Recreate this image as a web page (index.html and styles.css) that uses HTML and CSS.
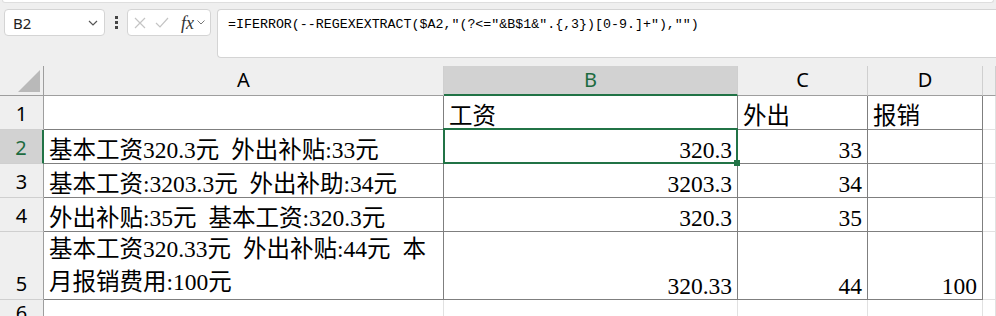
FILE: index.html
```html
<!DOCTYPE html>
<html lang="zh-CN">
<head>
    <meta charset="UTF-8">
    <title>REGEXEXTRACT</title>
    <link rel="stylesheet" href="styles.css">
</head>
<body>
    <div class="topbar">
        <div class="ribbon-edge"></div>
        <div class="formula-row">
            <div class="name-box">
                <span>B2</span>
                <svg class="chev" width="10" height="6" viewBox="0 0 10 6"><polyline points="1,1 5,5 9,1" fill="none" stroke="#555" stroke-width="1.2"/></svg>
            </div>
            <div class="grip"><i></i><i></i><i></i></div>
            <div class="fx-box">
                <svg width="12" height="12" viewBox="0 0 12 12"><path d="M1 1 L11 11 M11 1 L1 11" stroke="#c4c4c4" stroke-width="1.2"/></svg>
                <svg width="14" height="11" viewBox="0 0 14 11"><polyline points="1,6 5,10 13,1" fill="none" stroke="#c4c4c4" stroke-width="1.2"/></svg>
                <span class="fx">fx</span>
                <svg width="8" height="5" viewBox="0 0 8 5"><polyline points="0.5,0.5 4,4 7.5,0.5" fill="none" stroke="#777" stroke-width="1"/></svg>
            </div>
            <div class="formula">=IFERROR(--REGEXEXTRACT($A2,"(?&lt;="&amp;B$1&amp;".{,3})[0-9.]+"),"")</div>
        </div>
    </div>

    <div class="sheet">
        <!-- 欄標題 -->
        <div class="corner"><span class="tri"></span></div>
        <div class="col-head">A</div>
        <div class="col-head active">B</div>
        <div class="col-head">C</div>
        <div class="col-head">D</div>
        <div class="col-head"></div>

        <!-- 第1列 -->
        <div class="row-head">1</div>
        <div class="cell"></div>
        <div class="cell">工资</div>
        <div class="cell">外出</div>
        <div class="cell">报销</div>
        <div class="cell out"></div>

        <!-- 第2列 -->
        <div class="row-head active">2</div>
        <div class="cell">基本工资320.3元 外出补贴:33元</div>
        <div class="cell num selected">320.3</div>
        <div class="cell num">33</div>
        <div class="cell"></div>
        <div class="cell out"></div>

        <!-- 第3列 -->
        <div class="row-head">3</div>
        <div class="cell">基本工资:3203.3元 外出补助:34元</div>
        <div class="cell num">3203.3</div>
        <div class="cell num">34</div>
        <div class="cell"></div>
        <div class="cell out"></div>

        <!-- 第4列 -->
        <div class="row-head">4</div>
        <div class="cell">外出补贴:35元 基本工资:320.3元</div>
        <div class="cell num">320.3</div>
        <div class="cell num">35</div>
        <div class="cell"></div>
        <div class="cell out"></div>

        <!-- 第5列 -->
        <div class="row-head">5</div>
        <div class="cell wrap"><p>基本工资320.33元 外出补贴:44元 本<br>月报销费用:100元</p></div>
        <div class="cell num">320.33</div>
        <div class="cell num">44</div>
        <div class="cell num">100</div>
        <div class="cell out"></div>

        <!-- 第6列 -->
        <div class="row-head last">6</div>
        <div class="cell out"></div>
        <div class="cell out"></div>
        <div class="cell out"></div>
        <div class="cell out"></div>
        <div class="cell out"></div>
    </div>
</body>
</html>
```

FILE: styles.css
```css
body {
    margin: 0;
    width: 996px;
    height: 316px;
    overflow: hidden;
    background: #fff;
    font-family: 'Noto Sans', 'Liberation Sans', sans-serif;
    color: #000;
}

.topbar {
    height: 66px;
    background: #efefef;
}

.ribbon-edge {
    height: 2px;
    margin: 0 2px;
    background: #fff;
    border: 1px solid #dedede;
    border-top: none;
    border-radius: 0 0 6px 6px;
}

.formula-row {
    display: flex;
    align-items: flex-start;
    padding: 6px 0 0 4px;
}

.name-box {
    width: 101px;
    height: 27px;
    box-sizing: border-box;
    background: #fff;
    border: 1px solid #d4d4d4;
    border-radius: 4px;
    display: flex;
    align-items: center;
    justify-content: space-between;
    padding: 0 6px 0 8px;
    font-size: 15px;
    color: #222;
}

.grip {
    width: 22px;
    height: 27px;
    display: flex;
    flex-direction: column;
    align-items: center;
    justify-content: center;
    gap: 2px;
}

.grip i {
    width: 3px;
    height: 3px;
    background: #444;
}

.fx-box {
    width: 84px;
    height: 27px;
    box-sizing: border-box;
    background: #fff;
    border: 1px solid #d4d4d4;
    border-radius: 4px;
    display: flex;
    align-items: center;
    padding: 0 0 0 6px;
}

.fx-box svg:nth-child(2) {
    margin-left: 9px;
}

.fx {
    font-family: 'Liberation Serif', serif;
    font-style: italic;
    font-size: 18px;
    color: #333;
    margin-left: 12px;
    margin-right: 3px;
    line-height: 1;
}

.formula {
    flex: 1;
    height: 49px;
    box-sizing: border-box;
    margin-left: 6px;
    background: #fff;
    border: 1px solid #d4d4d4;
    border-right: none;
    border-radius: 4px 0 0 4px;
    padding: 6px 0 0 10px;
    font-family: 'Liberation Mono', monospace;
    font-size: 13.3px;
    line-height: 18px;
    white-space: pre;
}

.sheet {
    display: grid;
    grid-template-columns: 44px 400px 294px 130px 115px 1fr;
    grid-template-rows: 30px 34px 34px 34px 34px 68px 18px;
}

.sheet > div {
    box-sizing: border-box;
    position: relative;
}

.corner {
    background: #efefef;
    border-right: 1px solid #9e9e9e;
    border-bottom: 1px solid #9e9e9e;
}

.tri {
    position: absolute;
    right: 3px;
    bottom: 3px;
    width: 0;
    height: 0;
    border-left: 22px solid transparent;
    border-bottom: 22px solid #b9b9b9;
}

.col-head {
    background: #efefef;
    border-right: 1px solid #cfcfcf;
    border-bottom: 1px solid #9e9e9e;
    display: flex;
    align-items: flex-end;
    justify-content: center;
    padding-bottom: 3px;
    font-size: 20px;
    line-height: 24px;
}

.col-head.active {
    background: #d2d2d2;
    color: #1d6b40;
    border-bottom: 2px solid #217346;
    padding-bottom: 2px;
}

.row-head {
    background: #efefef;
    border-right: 1px solid #9e9e9e;
    border-bottom: 1px solid #cfcfcf;
    display: flex;
    align-items: flex-end;
    justify-content: center;
    padding-bottom: 3px;
    font-size: 20px;
    line-height: 24px;
}

.row-head.last {
    align-items: flex-start;
    padding: 1px 0 0;
    overflow: hidden;
}

.row-head.active {
    background: #d2d2d2;
    color: #1d6b40;
    border-right: 2px solid #217346;
}

.cell {
    border-right: 1px solid #7f7f7f;
    border-bottom: 1px solid #7f7f7f;
    display: flex;
    align-items: flex-end;
    padding: 0 5px;
    font-family: 'Liberation Serif', 'Noto Sans CJK SC', serif;
    font-size: 23.5px;
    line-height: 26px;
    word-spacing: 6px;
    white-space: nowrap;
}

.cell.num {
    justify-content: flex-end;
}

.cell.wrap p {
    margin: 0;
    line-height: 33px;
}

.cell.out {
    border-right-color: #e1e1e1;
    border-bottom-color: #e1e1e1;
}

.sheet > .cell:nth-last-child(-n+5) {
    border-right-color: #e1e1e1;
}

.selected::after {
    content: '';
    position: absolute;
    top: -2px;
    left: -1px;
    right: -1px;
    bottom: -1px;
    border: 2px solid #217346;
}

.selected::before {
    content: '';
    position: absolute;
    right: -3px;
    bottom: -3px;
    width: 6px;
    height: 6px;
    background: #217346;
    z-index: 1;
}
```
